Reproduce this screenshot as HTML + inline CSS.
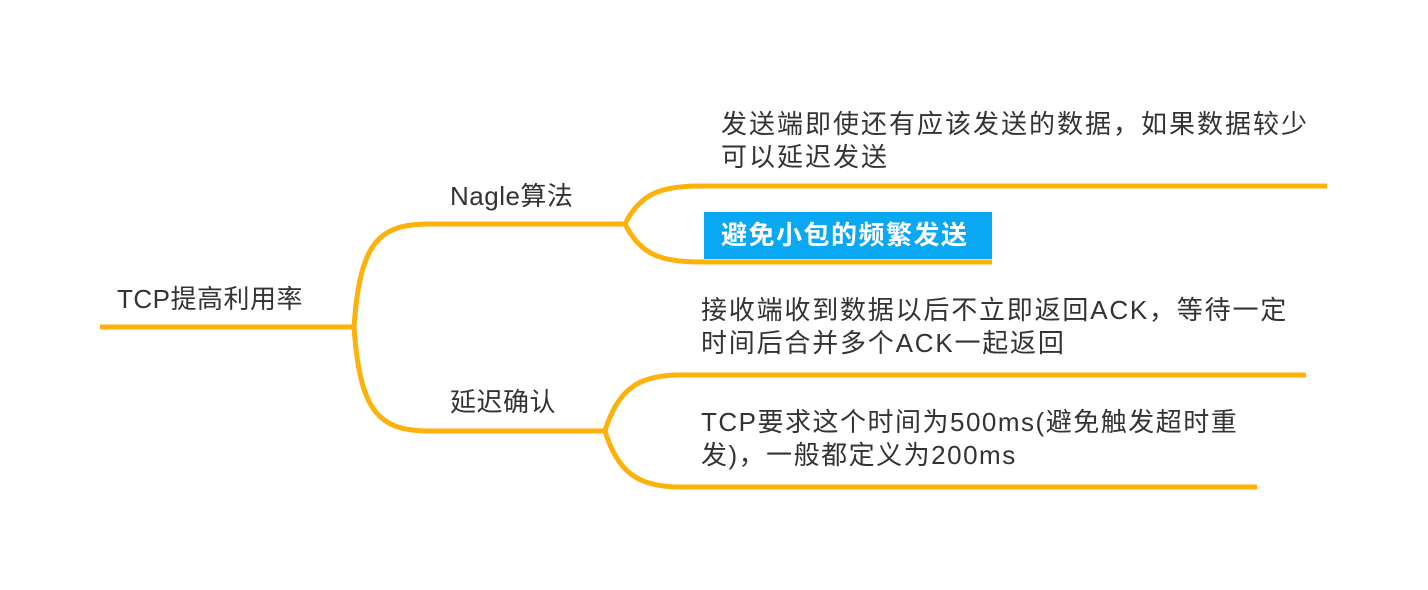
<!DOCTYPE html>
<html><head><meta charset="utf-8"><style>
body{margin:0;width:1428px;height:590px;background:#fff;position:relative;overflow:hidden;font-family:"Liberation Sans","Noto Sans CJK SC",sans-serif;color:#333}
.t{position:absolute;white-space:nowrap;font-size:26px;letter-spacing:2px;line-height:33px}
.s{font-size:26px;letter-spacing:0.5px}
svg{position:absolute;left:0;top:0}
</style></head><body>
<svg width="1428" height="590">
<g fill="none" stroke="#FDB10B" stroke-width="5">
<path d="M100 327 H354"/>
<path d="M354 327 C360 240 380 224 430 224 H625"/>
<path d="M354 327 C360 414 380 431 430 431 H605"/>
<path d="M625 224 C640 194 660 186 700 186 H1327"/>
<path d="M625 224 C640 254 660 262 700 262 H992"/>
<path d="M605 431 C618 388 640 375 680 375 H1306"/>
<path d="M605 431 C618 474 640 487 680 487 H1257"/>
</g>
<rect x="704" y="212" width="288" height="47" fill="#0AA8F2"/>
</svg>
<div class="t s" style="left:117px;top:283px">TCP提高利用率</div>
<div class="t s" style="left:450px;top:180px">Nagle算法</div>
<div class="t s" style="left:450px;top:386px">延迟确认</div>
<div class="t" style="left:721px;top:108px">发送端即使还有应该发送的数据，如果数据较少<br>可以延迟发送</div>
<div class="t" style="left:721px;top:219px;color:#fff;font-weight:bold;letter-spacing:1.5px">避免小包的频繁发送</div>
<div class="t" style="left:701px;top:294px;letter-spacing:1.8px">接收端收到数据以后不立即返回ACK，等待一定<br>时间后合并多个ACK一起返回</div>
<div class="t" style="left:701px;top:406px;letter-spacing:1.5px">TCP要求这个时间为500ms(避免触发超时重<br>发)，一般都定义为200ms</div>
</body></html>
